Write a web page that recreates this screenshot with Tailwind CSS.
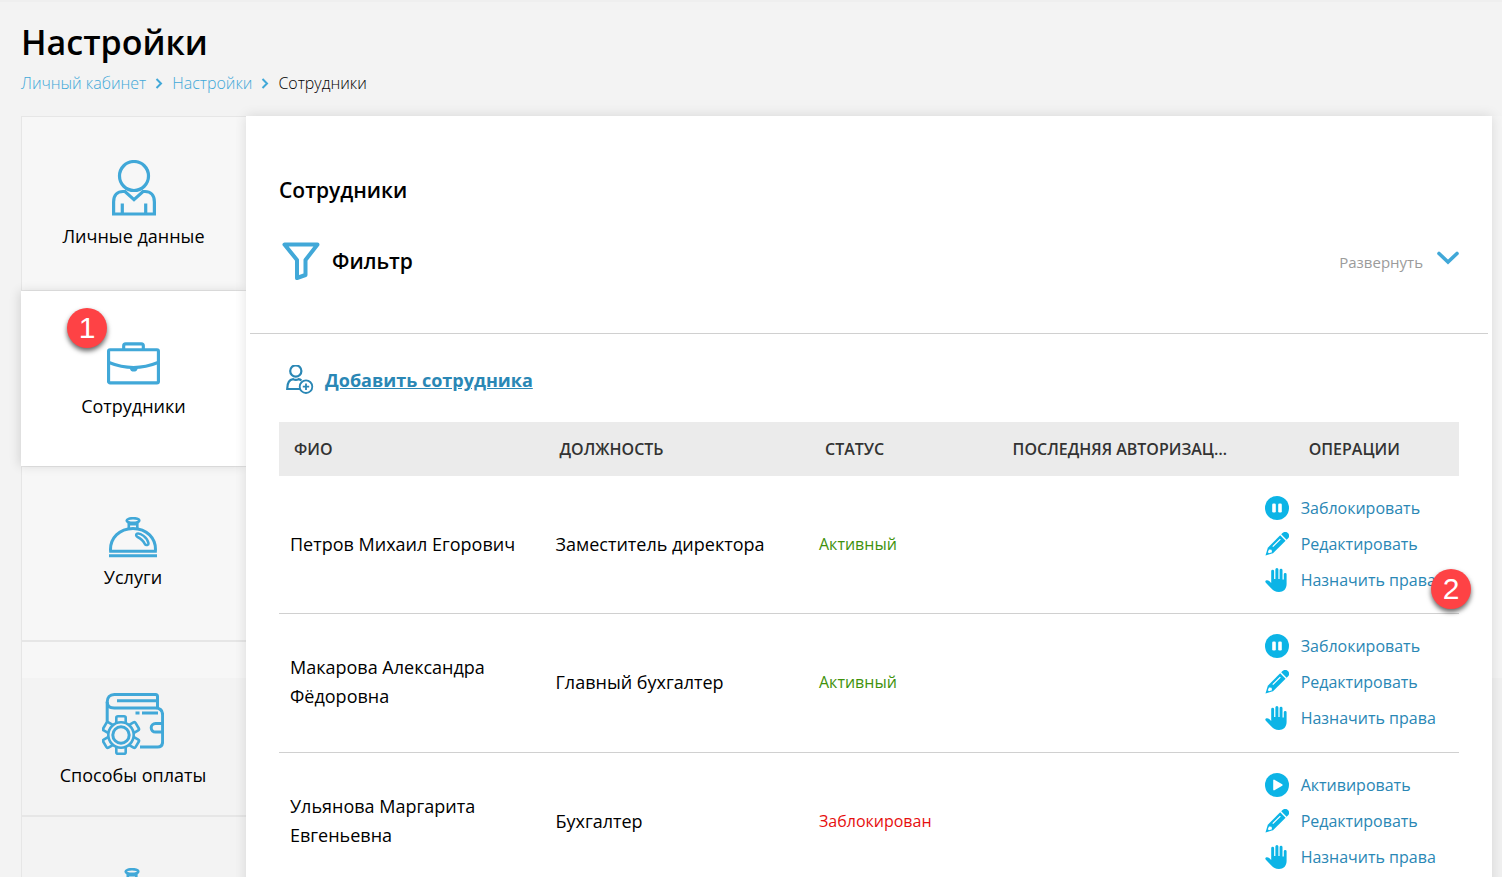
<!DOCTYPE html>
<html lang="ru">
<head>
<meta charset="utf-8">
<meta name="viewport" content="width=device-width, initial-scale=1">
<title>Настройки — Сотрудники</title>
<script src="https://cdn.jsdelivr.net/npm/@tailwindcss/browser@4"></script>
</head>
<body class="h-screen overflow-hidden bg-[#f3f3f3] font-['Open_Sans','Noto_Sans',sans-serif] text-black">
<svg class="hidden" xmlns="http://www.w3.org/2000/svg">
  <symbol id="i-pause" viewBox="0 0 24 24"><circle cx="12" cy="12" r="12" fill="#0cb4e6"/><rect x="7.200" y="7.500" width="3.600" height="9" rx="1.300" fill="#fff"/><rect x="13.200" y="7.500" width="3.600" height="9" rx="1.300" fill="#fff"/></symbol>
  <symbol id="i-play" viewBox="0 0 24 24"><circle cx="12" cy="12" r="12" fill="#0cb4e6"/><path d="M8.200 7.400v9.200a.8.8 0 0 0 1.200.7l7.800-4.600a.8.8 0 0 0 0-1.400L9.400 6.700a.8.8 0 0 0-1.200.7z" fill="#fff"/></symbol>
  <symbol id="i-edit" viewBox="0 0 24 24"><path d="M16.200 2.300l1.300-1.200a3.800 3.800 0 0 1 5.400 5.400l-1.300 1.200z" fill="#0cb4e6"/><path d="M15.200 3.300l5.400 5.400L8 21.200.5 23.500 2.800 15.800z" fill="#0cb4e6"/><path d="M4 17.600l2.600.2.400 2.500-3 1-1.200-1.100zM7.300 14.200l7.600-7.500.9.900-7.600 7.500z" fill="#fff"/></symbol>
  <symbol id="i-hand" viewBox="0 0 24 24"><path d="M6.200 15V3.300a1.400 1.400 0 0 1 2.900 0V11h1.300V1.600a1.500 1.500 0 0 1 3 0V11h1.200V2.300a1.450 1.450 0 0 1 2.900 0V11.500h1.300V6.300a1.400 1.400 0 0 1 2.800 0V16c0 5-3.200 8-7.600 8-3.600 0-5.600-1.200-7.600-3.400L.8 14.700c-.9-1.100-.4-2.200.7-2.400 1.600-.3 3.400.9 4.700 2.700z" fill="#0cb4e6"/></symbol>
  <symbol id="i-cloche" viewBox="0 0 48 41"><g fill="none" stroke="#41a8d8" stroke-width="3"><ellipse cx="24" cy="3.500" rx="6.300" ry="2.300" stroke-width="2.600"/><path d="M19.800 5.500v5.500M28.300 5.500v5.500M19.500 7.300h9" stroke-width="2.600"/><path d="M1.600 34.200c-1-13 9-22.800 22.400-22.800S47.400 21.200 46.400 34.200z"/><path d="M0 38.800h48" stroke-width="3"/><path d="M28 16.600c3.200-1.200 10.500 4 11.500 9.700.2 1.600-2.500 2.500-3.500 1-1.700-3.600-4-5.800-7.400-7.300-1.700-.8-2-2.800-.6-3.400z" stroke-width="2.500"/></g></symbol>
</svg>

<div class="h-full border-t-2 border-[#efefef]">
  <header class="px-[21px] pt-4">
    <h1 class="text-[34px] leading-[48px] font-semibold">Настройки</h1>
    <nav aria-label="Навигационная цепочка" class="mt-[5px] flex h-6 items-center text-base font-light">
      <a href="#" class="text-[#41a8d8]">Личный кабинет</a>
      <svg class="mx-[9px] h-[11px] w-2" viewBox="0 0 8 11" fill="none" stroke="#41a8d8" stroke-width="2"><path d="M1.500 1L6 5.500 1.500 10"/></svg>
      <a href="#" class="text-[#41a8d8]">Настройки</a>
      <svg class="mx-[9px] h-[11px] w-2" viewBox="0 0 8 11" fill="none" stroke="#41a8d8" stroke-width="2"><path d="M1.500 1L6 5.500 1.500 10"/></svg>
      <span>Сотрудники</span>
    </nav>
  </header>

  <div class="mt-[21px] flex bg-linear-[to_bottom,#f5f5f5_562px,#f1f1f1_562px] pr-[10px]">
    <aside class="w-[246px] shrink-0 bg-[#f3f3f3] pl-[21px] text-center text-lg">
      <a href="#" class="flex h-[175px] flex-col items-center border-t border-b border-l border-[#e6e6e6] bg-[#f7f7f7] pt-[43px] pr-px">
        <svg class="h-[56px] w-11" viewBox="0 0 44 56" fill="none" stroke="#41a8d8" stroke-width="3.200"><circle cx="22" cy="16" r="14.500"/><path d="M1.600 54V42c0-7 4-10.500 9.400-10.500h2L22 39.600l9-8.100h2c5.400 0 9.400 3.500 9.400 10.500v12z"/><path d="M10.300 43.500V54M33.700 43.500V54"/></svg>
        <span class="mt-[6px] leading-7">Личные данные</span>
      </a>
      <a href="#" aria-current="page" class="relative flex h-[175px] flex-col items-center bg-white pt-[51px] shadow-[-2px_0_10px_rgba(0,0,0,0.12)]">
        <svg class="h-[43px] w-[53px]" viewBox="0 0 54 43" fill="none" stroke="#41a8d8" stroke-width="3.200"><path d="M17 7V3.500a2 2 0 0 1 2-2h16a2 2 0 0 1 2 2V7"/><rect x="1.600" y="7.500" width="50.800" height="33.800" rx="1.500"/><path d="M2 20.500c16 6.500 34 6.500 50 0"/><path d="M23 25.500h8.500a4.200 4.200 0 0 1-8.500 0z" fill="#41a8d8" stroke="none"/></svg>
        <span class="mt-[7px] leading-7">Сотрудники</span>
        <span class="absolute top-[17px] left-[46px] flex size-10 items-center justify-center rounded-full bg-[#fe4245] font-['Liberation_Sans',sans-serif] text-[30px] leading-none text-white shadow-[0_3px_5px_rgba(0,0,0,0.6)]">1</span>
      </a>
      <a href="#" class="flex h-[175px] flex-col items-center border-t border-b border-l border-[#e6e6e6] bg-[#f7f7f7] pt-[50px] pr-[2px]">
        <svg class="h-[41px] w-12"><use href="#i-cloche"/></svg>
        <span class="mt-[5px] leading-7">Услуги</span>
      </a>
      <a href="#" class="flex h-[175px] flex-col items-center border-t border-b border-l border-[#e6e6e6] bg-linear-[to_bottom,#f7f7f7_36px,#f3f3f3_36px] pt-[51px] pr-[2px]">
        <svg class="h-[62px] w-[62px]" viewBox="0 0 62 62" fill="none" stroke="#41a8d8" stroke-width="3"><path d="M5.200 30V9c0-4.500 2.700-7.500 7-7.500h41.300a2 2 0 0 1 2 2V14"/><path d="M5.200 9c0 4 2.500 6 7 6h41.200c4.600 0 7.200 2.700 7.200 7v26.500c0 3.500-2 5.500-5 5.500H38"/><path d="M15 7.800h40M33.500 20h4M40 20h16" stroke-width="3"/><path d="M61 30.500h-7.500a4.300 4.300 0 0 0 0 8.600H61"/><circle cx="19" cy="42" r="8.200" stroke-width="3"/><circle cx="19" cy="42" r="12.700" stroke-width="2.600"/><path id="tooth" d="M14.300 30.200v-5.400c0-1 .7-1.500 1.700-1.500h6c1 0 1.700.5 1.700 1.500v5.400" stroke-width="2.600"/><use href="#tooth" transform="rotate(60 19 42)"/><use href="#tooth" transform="rotate(120 19 42)"/><use href="#tooth" transform="rotate(180 19 42)"/><use href="#tooth" transform="rotate(240 19 42)"/><use href="#tooth" transform="rotate(300 19 42)"/></svg>
        <span class="mt-[6px] leading-7">Способы оплаты</span>
      </a>
      <a href="#" aria-label="Ещё услуги" class="flex h-[175px] flex-col items-center border-t border-b border-l border-[#e6e6e6] bg-[#f3f3f3] pt-[51px] pr-[4px]">
        <svg class="h-[41px] w-12"><use href="#i-cloche"/></svg>
      </a>
    </aside>

    <main class="min-w-0 flex-1 bg-white shadow-[0_0_12px_rgba(0,0,0,0.12)] [clip-path:inset(-12px_-12px_0_-10px)]">
      <h2 class="px-[33px] pt-[60px] text-[21px] leading-7 font-semibold">Сотрудники</h2>
      <section class="mx-1 mt-[38px] flex h-[92px] items-start justify-between border-b border-[#d0d0d0] pr-[29px] pl-8">
        <h3 class="flex items-center gap-3 text-[21px] leading-[38px] font-semibold">
          <svg class="h-[38px] w-[38px]" viewBox="0 0 38 38" fill="none" stroke="#41a8d8" stroke-width="4" stroke-linejoin="round"><path d="M2.500 2.500h33L23.500 18v15L15 36V18z"/></svg>
          Фильтр
        </h3>
        <button type="button" class="flex items-center gap-[14px] pt-2 text-[15px] leading-6 text-[#9b9b9b]">Развернуть
          <svg class="mb-2 h-[14px] w-[22px]" viewBox="0 0 22 14" fill="none" stroke="#41a8d8" stroke-width="3.600" stroke-linecap="round"><path d="M2 2.500l9 8.500 9-8.500"/></svg>
        </button>
      </section>

      <a href="#" class="mt-[30px] ml-10 inline-flex items-center gap-[11px] text-lg leading-8 font-bold text-[#2a87b5]">
        <svg class="h-[30px] w-7" viewBox="0 0 28 30" fill="none" stroke="#2a87b5" stroke-width="2.200"><circle cx="9.800" cy="6" r="5.600"/><path d="M14 24H1.200c0-5.500 1.800-9.300 6-9.800 1.800.9 3.600.9 5.400 0 1.200.2 2 .6 2.900 1.300"/><circle cx="20" cy="21.700" r="6.300" stroke-width="1.800"/><path d="M20 18.500v6.400M16.800 21.700h6.400" stroke-width="1.800"/></svg>
        <span class="underline">Добавить сотрудника</span>
      </a>

      <div class="mt-[21px] px-[33px]">
        <table class="w-full table-fixed text-left">
          <colgroup><col class="w-[22.5%]"><col class="w-[22.5%]"><col class="w-[15.9%]"><col class="w-[21.7%]"><col></colgroup>
          <thead>
            <tr class="h-[54px] bg-[#ebebeb] text-base text-[#333]">
              <th class="px-[15px] font-semibold">ФИО</th>
              <th class="px-[15px] font-semibold">ДОЛЖНОСТЬ</th>
              <th class="px-[15px] font-semibold">СТАТУС</th>
              <th class="truncate pr-5 pl-[15px] font-semibold">ПОСЛЕДНЯЯ АВТОРИЗАЦИЯ</th>
              <th class="pr-1 text-center font-semibold">ОПЕРАЦИИ</th>
            </tr>
          </thead>
          <tbody class="text-lg leading-[29px]">
            <tr class="h-[137px] border-b border-[#d0d0d0]">
              <td class="px-[11px]">Петров Михаил Егорович</td>
              <td class="px-[11px]">Заместитель директора</td>
              <td class="px-[9px] text-base text-[#3f920c]">Активный</td>
              <td></td>
              <td class="relative pl-[11px] text-base leading-6 whitespace-nowrap text-[#2a87b5]">
                <div class="flex flex-col gap-3">
                  <a href="#" class="flex gap-3"><svg class="size-6"><use href="#i-pause"/></svg>Заблокировать</a>
                  <a href="#" class="flex gap-3"><svg class="size-6"><use href="#i-edit"/></svg>Редактировать</a>
                  <a href="#" class="flex gap-3"><svg class="size-6"><use href="#i-hand"/></svg>Назначить права</a>
                </div>
                <span class="absolute top-[93px] -right-3 flex size-10 items-center justify-center rounded-full bg-[#fe4245] font-['Liberation_Sans',sans-serif] text-[30px] leading-none text-white shadow-[0_3px_5px_rgba(0,0,0,0.6)]">2</span>
              </td>
            </tr>
            <tr class="h-[139px] border-b border-[#d0d0d0]">
              <td class="px-[11px] pb-px">Макарова Александра Фёдоровна</td>
              <td class="px-[11px] pb-px">Главный бухгалтер</td>
              <td class="px-[9px] pb-px text-base text-[#3f920c]">Активный</td>
              <td></td>
              <td class="pb-px pl-[11px] text-base leading-6 whitespace-nowrap text-[#2a87b5]">
                <div class="flex flex-col gap-3">
                  <a href="#" class="flex gap-3"><svg class="size-6"><use href="#i-pause"/></svg>Заблокировать</a>
                  <a href="#" class="flex gap-3"><svg class="size-6"><use href="#i-edit"/></svg>Редактировать</a>
                  <a href="#" class="flex gap-3"><svg class="size-6"><use href="#i-hand"/></svg>Назначить права</a>
                </div>
              </td>
            </tr>
            <tr class="h-[139px] border-b border-[#d0d0d0]">
              <td class="px-[11px] pb-px">Ульянова Маргарита Евгеньевна</td>
              <td class="px-[11px] pb-px">Бухгалтер</td>
              <td class="px-[9px] pb-px text-base text-[#e60f0f]">Заблокирован</td>
              <td></td>
              <td class="pb-[2px] pl-[11px] text-base leading-6 whitespace-nowrap text-[#2a87b5]">
                <div class="flex flex-col gap-3">
                  <a href="#" class="flex gap-3"><svg class="size-6"><use href="#i-play"/></svg>Активировать</a>
                  <a href="#" class="flex gap-3"><svg class="size-6"><use href="#i-edit"/></svg>Редактировать</a>
                  <a href="#" class="flex gap-3"><svg class="size-6"><use href="#i-hand"/></svg>Назначить права</a>
                </div>
              </td>
            </tr>
          </tbody>
        </table>
      </div>
    </main>
  </div>
</div>
</body>
</html>
